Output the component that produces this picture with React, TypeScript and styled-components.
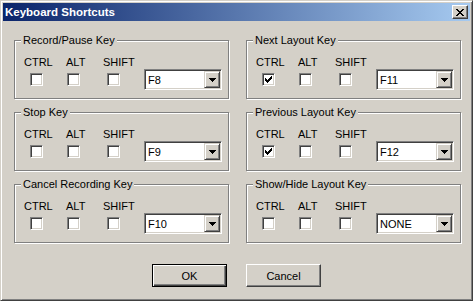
import styled, { createGlobalStyle } from "styled-components";

const GlobalStyle = createGlobalStyle`
  html, body {
    margin: 0;
    padding: 0;
    background: #d4d0c8;
  }
  body {
    font-family: "Liberation Sans", Arial, sans-serif;
    font-size: 11px;
    color: #000;
  }
`;

const Window = styled.div`
  box-sizing: border-box;
  width: 473px;
  height: 301px;
  background: #d4d0c8;
  border: 1px solid;
  border-color: #d4d0c8 #404040 #404040 #d4d0c8;
  box-shadow: inset 1px 1px 0 #fff, inset -1px -1px 0 #808080;
  padding: 2px;
  display: flex;
  flex-direction: column;
`;

const TitleBar = styled.div`
  height: 18px;
  display: flex;
  align-items: center;
  justify-content: space-between;
  padding: 0 2px;
  background: linear-gradient(to right, #0a246a, #a6caf0);
`;

const Title = styled.span`
  color: #fff;
  font-weight: bold;
  font-size: 11.5px;
  line-height: 18px;
`;

const CloseButton = styled.button`
  box-sizing: border-box;
  width: 16px;
  height: 14px;
  padding: 0;
  margin: 0;
  background: #d4d0c8;
  border: 1px solid;
  border-color: #fff #404040 #404040 #fff;
  box-shadow: inset -1px -1px 0 #808080;
  display: flex;
  align-items: center;
  justify-content: center;
`;

const Body = styled.div`
  padding: 19px 11px 0;
`;

const Grid = styled.div`
  display: grid;
  grid-template-columns: 215px 215px;
  grid-auto-rows: 59px;
  column-gap: 17px;
  row-gap: 13px;
`;

const Group = styled.div`
  position: relative;
  box-sizing: border-box;
  border: 1px solid #808080;
  box-shadow: inset 1px 1px 0 #fff, 1px 1px 0 #fff;
  padding: 15px 0 0 9px;
`;

const Legend = styled.span`
  position: absolute;
  top: -7px;
  left: 6px;
  padding: 0 2px;
  line-height: 13px;
  background: #d4d0c8;
  white-space: nowrap;
`;

const Row = styled.div`
  display: flex;
  align-items: flex-start;
`;

const Option = styled.div<{ $width: number; $offset: number }>`
  width: ${(p) => p.$width}px;
  display: flex;
  flex-direction: column;
  align-items: flex-start;
  line-height: 13px;

  & > :last-child {
    margin-left: ${(p) => p.$offset}px;
  }
`;

const Box = styled.div`
  box-sizing: border-box;
  width: 13px;
  height: 13px;
  margin-top: 4px;
  background: #fff;
  border: 1px solid;
  border-color: #808080 #fff #fff #808080;
  box-shadow: inset 1px 1px 0 #404040, inset -1px -1px 0 #d4d0c8;
  display: flex;
  align-items: center;
  justify-content: center;
`;

const Combo = styled.div`
  box-sizing: border-box;
  width: 78px;
  height: 21px;
  margin-top: 13px;
  background: #fff;
  border: 1px solid;
  border-color: #808080 #fff #fff #808080;
  box-shadow: inset 1px 1px 0 #404040, inset -1px -1px 0 #d4d0c8;
  padding: 1px;
  display: flex;
  align-items: center;
`;

const ComboText = styled.span`
  flex: 1;
  padding-left: 2px;
  font-size: 11px;
`;

const DropButton = styled.div`
  box-sizing: border-box;
  width: 16px;
  height: 17px;
  background: #d4d0c8;
  border: 1px solid;
  border-color: #d4d0c8 #404040 #404040 #d4d0c8;
  box-shadow: inset 1px 1px 0 #fff, inset -1px -1px 0 #808080;
  display: flex;
  align-items: center;
  justify-content: center;
`;

const Buttons = styled.div`
  display: flex;
  justify-content: center;
  gap: 19px;
  margin-top: 21px;
  padding-right: 0;
`;

const Button = styled.button<{ $default?: boolean }>`
  box-sizing: border-box;
  width: 75px;
  height: 23px;
  margin: 0;
  padding: 0;
  font-family: "Liberation Sans", Arial, sans-serif;
  font-size: 11px;
  color: #000;
  background: #d4d0c8;
  border: 1px solid;
  border-color: ${(p) => (p.$default ? "#000" : "#fff #404040 #404040 #fff")};
  box-shadow: ${(p) =>
    p.$default
      ? "inset 1px 1px 0 #fff, inset -1px -1px 0 #404040, inset -2px -2px 0 #808080"
      : "inset -1px -1px 0 #808080"};
`;

const Check = () => (
  <svg width="7" height="7" viewBox="0 0 7 7" shapeRendering="crispEdges">
    <path
      d="M0 2h1v3H0zM1 3h1v3H1zM2 4h1v3H2zM3 3h1v3H3zM4 2h1v3H4zM5 1h1v3H5zM6 0h1v3H6z"
      fill="#000"
    />
  </svg>
);

const Arrow = () => (
  <svg width="7" height="4" viewBox="0 0 7 4" shapeRendering="crispEdges">
    <path d="M0 0h7v1H0zM1 1h5v1H1zM2 2h3v1H2zM3 3h1v1H3z" fill="#000" />
  </svg>
);

const CloseIcon = () => (
  <svg width="8" height="7" viewBox="0 0 8 7" shapeRendering="crispEdges">
    <path
      d="M0 0h2v1H0zM6 0h2v1H6zM1 1h2v1H1zM5 1h2v1H5zM2 2h4v1H2zM3 3h2v1H3zM2 4h4v1H2zM1 5h2v1H1zM5 5h2v1H5zM0 6h2v1H0zM6 6h2v1H6z"
      fill="#000"
    />
  </svg>
);

type Shortcut = { title: string; ctrl: boolean; alt: boolean; shift: boolean; key: string };

const shortcuts: Shortcut[] = [
  { title: "Record/Pause Key", ctrl: false, alt: false, shift: false, key: "F8" },
  { title: "Next Layout Key", ctrl: true, alt: false, shift: false, key: "F11" },
  { title: "Stop Key", ctrl: false, alt: false, shift: false, key: "F9" },
  { title: "Previous Layout Key", ctrl: true, alt: false, shift: false, key: "F12" },
  { title: "Cancel Recording Key", ctrl: false, alt: false, shift: false, key: "F10" },
  { title: "Show/Hide Layout Key", ctrl: false, alt: false, shift: false, key: "NONE" },
];

const ShortcutGroup = ({ item }: { item: Shortcut }) => (
  <Group>
    <Legend>{item.title}</Legend>
    <Row>
      <Option $width={42} $offset={6}>
        <span>CTRL</span>
        <Box>{item.ctrl && <Check />}</Box>
      </Option>
      <Option $width={37} $offset={1}>
        <span>ALT</span>
        <Box>{item.alt && <Check />}</Box>
      </Option>
      <Option $width={41} $offset={4}>
        <span>SHIFT</span>
        <Box>{item.shift && <Check />}</Box>
      </Option>
      <Combo>
        <ComboText>{item.key}</ComboText>
        <DropButton>
          <Arrow />
        </DropButton>
      </Combo>
    </Row>
  </Group>
);

export default function App() {
  return (
    <>
      <GlobalStyle />
      <Window>
        <TitleBar>
          <Title>Keyboard Shortcuts</Title>
          <CloseButton>
            <CloseIcon />
          </CloseButton>
        </TitleBar>
        <Body>
          <Grid>
            {shortcuts.map((s) => (
              <ShortcutGroup key={s.title} item={s} />
            ))}
          </Grid>
          <Buttons>
            <Button $default>OK</Button>
            <Button>Cancel</Button>
          </Buttons>
        </Body>
      </Window>
    </>
  );
}
